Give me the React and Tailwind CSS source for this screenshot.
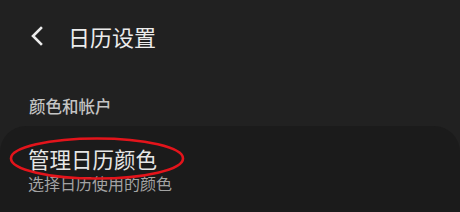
import React from "react";

export default function App() {
  return (
    <div
      className="w-[460px] h-[212px] bg-[#212121] overflow-hidden relative flex flex-col"
      style={{ fontFamily: '"Noto Sans CJK SC", "Noto Sans", sans-serif' }}
    >
      <div className="h-[72px] flex items-center pl-[30px] shrink-0">
        <svg width="14" height="20" viewBox="0 0 14 20" className="mr-[24px]">
          <path d="M11 2 L3 10 L11 18" fill="none" stroke="#ececec" strokeWidth="2.6" strokeLinecap="square" />
        </svg>
        <span className="text-[22px] leading-none text-[#ececec]">日历设置</span>
      </div>
      <div className="pl-[29px] pt-[26px] text-[16.5px] leading-none font-medium text-[#c4c4c4]">颜色和帐户</div>
      <div className="mt-[11px] flex-1 bg-[#1b1b1b] rounded-t-[26px] pl-[28px] pt-[22px] relative">
        <div className="text-[21.5px] leading-none text-[#e6e6e6]">管理日历颜色</div>
        <div className="mt-[6px] text-[16px] leading-none text-[#a3a3a3]">选择日历使用的颜色</div>
        <svg className="absolute left-[9px] top-[10px]" width="176" height="45" viewBox="0 0 176 45">
          <ellipse cx="88" cy="22.5" rx="86" ry="20" fill="none" stroke="#e3141b" strokeWidth="2.6" />
        </svg>
      </div>
    </div>
  );
}
